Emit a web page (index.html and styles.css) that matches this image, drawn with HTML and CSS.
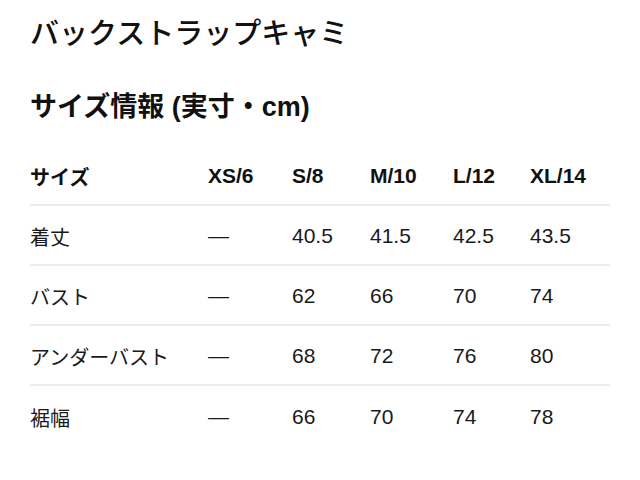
FILE: index.html
```html
<!DOCTYPE html>
<html lang="ja">
<head>
<meta charset="utf-8">
<link rel="stylesheet" href="styles.css">
</head>
<body>
<main class="page">
  <h1 class="title">バックストラップキャミ</h1>
  <h2 class="subtitle">サイズ情報 (実寸・cm)</h2>
  <div class="table">
    <div class="row head">
      <span class="label">サイズ</span><span>XS/6</span><span>S/8</span><span>M/10</span><span>L/12</span><span>XL/14</span>
    </div>
    <div class="row">
      <span class="label">着丈</span><span>—</span><span>40.5</span><span>41.5</span><span>42.5</span><span>43.5</span>
    </div>
    <div class="row">
      <span class="label">バスト</span><span>—</span><span>62</span><span>66</span><span>70</span><span>74</span>
    </div>
    <div class="row">
      <span class="label">アンダーバスト</span><span>—</span><span>68</span><span>72</span><span>76</span><span>80</span>
    </div>
    <div class="row last">
      <span class="label">裾幅</span><span>—</span><span>66</span><span>70</span><span>74</span><span>78</span>
    </div>
  </div>
</main>
</body>
</html>
```
FILE: styles.css
```css
html, body {
  margin: 0;
  padding: 0;
  background: #fff;
}
body {
  font-family: "Liberation Sans", "Noto Sans CJK JP", sans-serif;
  color: #111;
}
.page {
  padding: 14px 30px 0 30px;
  width: 580px;
}
.title {
  margin: 0;
  font-size: 29px;
  line-height: 40px;
  font-weight: 500;
}
.subtitle {
  margin: 37px 0 0 0;
  font-size: 27px;
  line-height: 32px;
  font-weight: 700;
}
.table {
  margin-top: 23px;
}
.row {
  display: grid;
  grid-template-columns: 178px 84px 78px 83px 77px 1fr;
  align-items: center;
  height: 60px;
  padding-top: 2px;
  box-sizing: border-box;
  border-bottom: 2px solid #ececec;
  font-size: 21px;
  color: #1a1a1a;
}
.row .label {
  font-size: 20px;
}
.row.head {
  font-weight: 700;
  color: #111;
}
.row.last {
  border-bottom: none;
}
```
